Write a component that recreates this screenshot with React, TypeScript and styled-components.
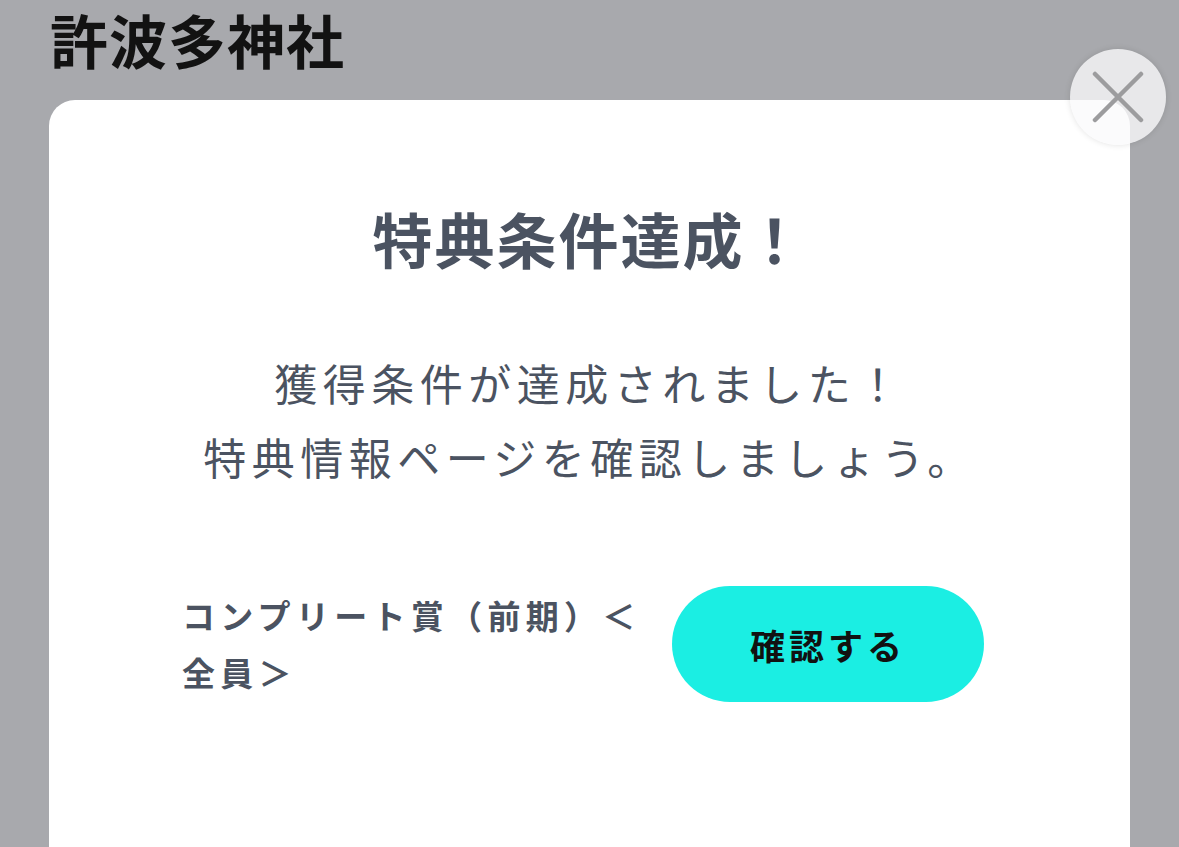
import React from 'react';
import styled, { createGlobalStyle } from 'styled-components';

const GlobalStyle = createGlobalStyle`
  html, body {
    margin: 0;
    padding: 0;
    background: #a8a9ad;
    overflow: hidden;
  }
  body {
    font-family: 'Noto Sans CJK JP', 'Noto Sans', sans-serif;
  }
`;

const Page = styled.div`
  height: 847px;
  padding: 0 49px;
  box-sizing: border-box;
  overflow: hidden;
`;

const ShrineName = styled.h1`
  margin: 0;
  padding-top: 6px;
  padding-left: 1px;
  height: 100px;
  box-sizing: border-box;
  font-size: 58px;
  line-height: 66px;
  font-weight: 700;
  color: #121212;
  letter-spacing: 1px;
`;

const Modal = styled.div`
  position: relative;
  width: 1081px;
  min-height: 800px;
  background: #ffffff;
  border-radius: 26px 26px 0 0;
  box-sizing: border-box;
  padding-top: 103px;
`;

const CloseButton = styled.button`
  position: absolute;
  top: -51px;
  right: -36px;
  width: 96px;
  height: 96px;
  border: none;
  border-radius: 50%;
  background: rgba(250, 250, 251, 0.78);
  box-shadow: 0 0 6px rgba(0, 0, 0, 0.12);
  display: flex;
  align-items: center;
  justify-content: center;
  padding: 0;
  cursor: pointer;
`;

const Heading = styled.h2`
  margin: 0;
  text-align: center;
  font-size: 60px;
  line-height: 70px;
  font-weight: 700;
  color: #4b5361;
  letter-spacing: 2px;
`;

const Message = styled.p`
  margin: 72px 0 0;
  text-align: center;
  font-size: 43px;
  line-height: 74px;
  font-weight: 400;
  color: #4b5361;
  letter-spacing: 5.5px;
`;

const RewardRow = styled.div`
  display: flex;
  align-items: center;
  margin-top: 93px;
  padding-left: 133px;
  gap: 20px;
`;

const RewardName = styled.div`
  width: 470px;
  font-size: 33px;
  line-height: 57px;
  font-weight: 700;
  color: #4b5361;
  letter-spacing: 5.3px;
`;

const ConfirmButton = styled.button`
  width: 312px;
  height: 116px;
  border: none;
  border-radius: 58px;
  background: #1beee3;
  font-family: 'Noto Sans CJK JP', 'Noto Sans', sans-serif;
  font-size: 35px;
  font-weight: 700;
  color: #111111;
  letter-spacing: 4px;
  cursor: pointer;
`;

const CloseIcon = () => (
  <svg width="52" height="52" viewBox="0 0 52 52" fill="none">
    <path d="M3 3 L49 49 M49 3 L3 49" stroke="#9c9c9e" strokeWidth="4.5" strokeLinecap="round" />
  </svg>
);

export default function App() {
  return (
    <>
      <GlobalStyle />
      <Page>
        <ShrineName>許波多神社</ShrineName>
        <Modal>
          <CloseButton aria-label="閉じる">
            <CloseIcon />
          </CloseButton>
          <Heading>特典条件達成！</Heading>
          <Message>
            獲得条件が達成されました！
            <br />
            特典情報ページを確認しましょう。
          </Message>
          <RewardRow>
            <RewardName>コンプリート賞（前期）＜全員＞</RewardName>
            <ConfirmButton>確認する</ConfirmButton>
          </RewardRow>
        </Modal>
      </Page>
    </>
  );
}
